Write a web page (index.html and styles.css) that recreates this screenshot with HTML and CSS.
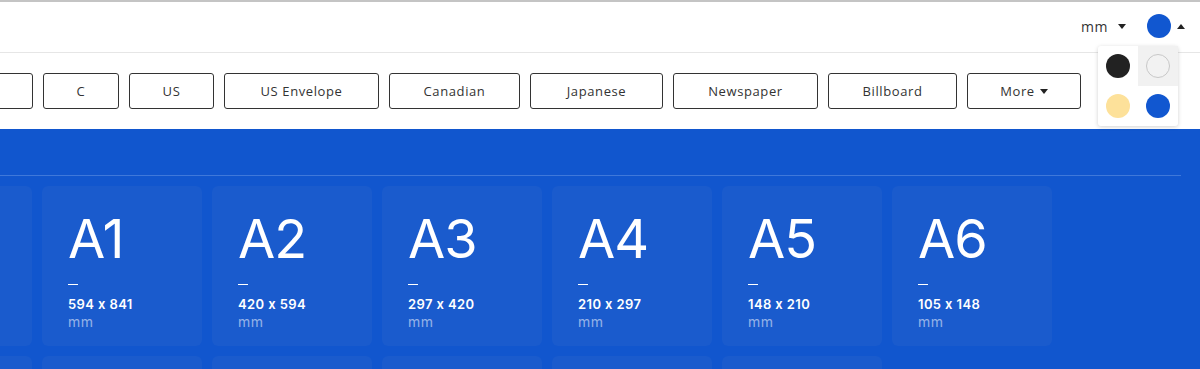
FILE: index.html
```html
<!DOCTYPE html>
<html lang="en">
<head>
  <meta charset="UTF-8">
  <title>Paper Sizes</title>
  <link rel="stylesheet" href="styles.css">
</head>
<body>
  <header class="topbar">
    <div class="unit-select">mm <span class="caret down"></span></div>
    <div class="theme-select">
      <span class="dot dot-blue"></span><span class="caret up"></span>
      <div class="theme-menu">
        <div class="swatch"><span class="dot dot-black"></span></div>
        <div class="swatch active"><span class="dot dot-white"></span></div>
        <div class="swatch"><span class="dot dot-yellow"></span></div>
        <div class="swatch"><span class="dot dot-blue"></span></div>
      </div>
    </div>
  </header>

  <nav class="series">
    <a class="series-btn w-sm"></a>
    <a class="series-btn w-sm">C</a>
    <a class="series-btn w-us">US</a>
    <a class="series-btn w-env">US Envelope</a>
    <a class="series-btn w-can">Canadian</a>
    <a class="series-btn w-jap">Japanese</a>
    <a class="series-btn w-news">Newspaper</a>
    <a class="series-btn w-bill">Billboard</a>
    <a class="series-btn w-more">More <span class="caret down"></span></a>
  </nav>

  <main class="sheet">
    <div class="sheet-head"></div>
    <div class="cards">
      <div class="card"></div>
      <div class="card"><div class="card-name">A1</div><div class="card-dash"></div><div class="card-dim">594 x 841</div><div class="card-unit">mm</div></div>
      <div class="card"><div class="card-name">A2</div><div class="card-dash"></div><div class="card-dim">420 x 594</div><div class="card-unit">mm</div></div>
      <div class="card"><div class="card-name">A3</div><div class="card-dash"></div><div class="card-dim">297 x 420</div><div class="card-unit">mm</div></div>
      <div class="card"><div class="card-name">A4</div><div class="card-dash"></div><div class="card-dim">210 x 297</div><div class="card-unit">mm</div></div>
      <div class="card"><div class="card-name">A5</div><div class="card-dash"></div><div class="card-dim">148 x 210</div><div class="card-unit">mm</div></div>
      <div class="card"><div class="card-name">A6</div><div class="card-dash"></div><div class="card-dim">105 x 148</div><div class="card-unit">mm</div></div>
      <div class="card"></div>
      <div class="card"></div>
      <div class="card"></div>
      <div class="card"></div>
      <div class="card"></div>
      <div class="card"></div>
    </div>
  </main>
</body>
</html>
```

FILE: styles.css
```css
body {
  margin: 0;
  font-family: "Open Sans", Arial, sans-serif;
  color: #333;
  background: #fff;
  overflow: hidden;
  border-top: 2px solid #c4c4c4;
}
.topbar {
  height: 50px;
  display: flex;
  justify-content: flex-end;
  align-items: center;
  gap: 21px;
  padding-right: 15px;
  border-bottom: 1px solid #e6e6e6;
}
.unit-select {
  font-size: 14px;
  letter-spacing: 0.5px;
  display: flex;
  align-items: center;
  gap: 10px;
  margin-top: -2px;
}
.caret {
  display: inline-block;
  width: 0;
  height: 0;
  border-left: 4px solid transparent;
  border-right: 4px solid transparent;
}
.caret.down { border-top: 5px solid #222; }
.caret.up { border-bottom: 5px solid #222; }
.theme-select {
  position: relative;
  display: flex;
  align-items: center;
  gap: 6px;
  margin-top: -2px;
}
.dot {
  display: block;
  width: 24px;
  height: 24px;
  border-radius: 50%;
  box-sizing: border-box;
}
.dot-blue { background: #1157d0; }
.dot-black { background: #222; }
.dot-yellow { background: #fde19a; }
.dot-white { background: #f2f2f2; border: 1px solid #c8c8c8; }
.theme-menu {
  position: absolute;
  top: 32px;
  left: -49px;
  width: 80px;
  display: grid;
  grid-template-columns: 40px 40px;
  background: #fff;
  border-radius: 3px;
  box-shadow: 0 1px 4px rgba(0,0,0,0.18);
  z-index: 5;
}
.swatch {
  height: 40px;
  display: flex;
  align-items: center;
  justify-content: center;
}
.swatch.active { background: #f1f1f1; }
.series {
  display: flex;
  gap: 10px;
  margin-left: -43px;
  padding-top: 20px;
  height: 56px;
}
.series-btn {
  height: 36px;
  box-sizing: border-box;
  border: 1px solid #333;
  border-radius: 3px;
  display: flex;
  align-items: center;
  justify-content: center;
  gap: 5px;
  font-size: 13px;
  letter-spacing: 0.6px;
  color: #333;
  flex: none;
}
.w-sm { width: 76px; }
.w-us { width: 85px; }
.w-env { width: 155px; }
.w-can { width: 131px; }
.w-jap { width: 133px; }
.w-news { width: 145px; }
.w-bill { width: 129px; }
.w-more { width: 114px; }
.sheet {
  background: #1156ce;
  height: 240px;
}
.sheet-head {
  height: 46px;
  margin-right: 19px;
  border-bottom: 1px solid #3f78da;
}
.cards {
  display: grid;
  grid-template-columns: repeat(7, 160px);
  gap: 10px;
  margin-left: -128px;
  padding-top: 10px;
}
.card {
  height: 160px;
  background: #1a5bcd;
  border-radius: 6px;
  padding: 26px 26px 0;
  box-sizing: border-box;
  color: #fff;
  font-family: Inter, "Open Sans", sans-serif;
}
.card-name {
  font-size: 54px;
  line-height: 54px;
  letter-spacing: -1px;
  margin-top: 0;
}
.card-dash {
  width: 10px;
  height: 1px;
  background: #fff;
  margin-top: 18px;
}
.card-dim {
  font-size: 13px;
  font-weight: 600;
  letter-spacing: 0.4px;
  margin-top: 11px;
}
.card-unit {
  font-size: 14px;
  letter-spacing: 0.6px;
  color: rgba(255,255,255,0.55);
  margin-top: 1px;
}
```
